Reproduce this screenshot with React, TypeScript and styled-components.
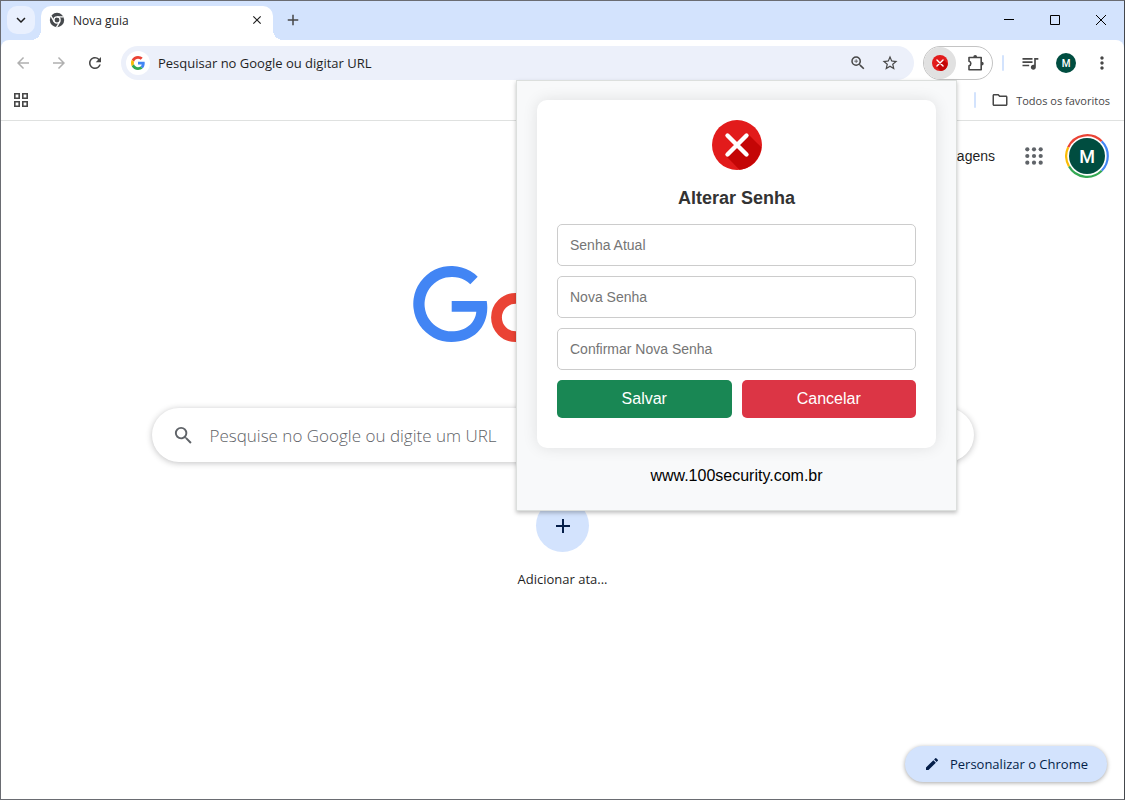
import React from "react";
import styled, { createGlobalStyle } from "styled-components";
import {
  MdAdd,
  MdArrowBack,
  MdArrowForward,
  MdClose,
  MdEdit,
  MdKeyboardArrowDown,
  MdMoreVert,
  MdOutlineFolder,
  MdOutlineQueueMusic,
  MdOutlineZoomIn,
  MdRefresh,
  MdSearch,
  MdStarBorder,
} from "react-icons/md";

const uiFont = `"Open Sans", "Noto Sans", sans-serif`;
const pageFont = `"Liberation Sans", Arial, sans-serif`;

const GlobalStyle = createGlobalStyle`
  *, *::before, *::after { box-sizing: border-box; }
  body { margin: 0; background: #fff; font-family: ${uiFont}; color: #1f1f1f; }
  button { border: 0; padding: 0; background: none; font: inherit; color: inherit; cursor: pointer; }
  a { color: inherit; text-decoration: none; }
  svg { display: block; flex: none; }
`;

const Window = styled.div`
  display: flex;
  flex-direction: column;
  min-height: 100vh;
  border: 1px solid #6a6c72;
  border-right-color: #44474c;
  background: #fff;
`;

const TabStrip = styled.header`
  display: flex;
  align-items: flex-start;
  height: 39px;
  padding-left: 6px;
  background: #d3e3fd;
`;

const TabSearch = styled.button`
  display: grid;
  place-items: center;
  width: 28px;
  height: 28px;
  margin: 5px 6px 0 0;
  border-radius: 10px;
  background: #e9f0fe;
`;

const Tab = styled.div`
  position: relative;
  display: flex;
  align-items: center;
  width: 232px;
  height: 34px;
  margin-top: 5px;
  padding: 0 8px 6px;
  gap: 8px;
  border-radius: 10px 10px 0 0;
  background: #fff;
  font-size: 12px;

  &::before,
  &::after {
    content: "";
    position: absolute;
    bottom: 0;
    width: 10px;
    height: 10px;
  }
  &::before {
    right: 100%;
    background: radial-gradient(circle at 0 0, transparent 10px, #fff 10px);
  }
  &::after {
    left: 100%;
    background: radial-gradient(circle at 100% 0, transparent 10px, #fff 10px);
  }
`;

const TabTitle = styled.span`
  flex: 1;
`;

const IconButton = styled.button<{ $size?: number; $color?: string }>`
  display: grid;
  flex: none;
  place-items: center;
  width: ${(p) => p.$size ?? 28}px;
  height: ${(p) => p.$size ?? 28}px;
  border-radius: 50%;
  color: ${(p) => p.$color ?? "#474747"};
`;

const NewTab = styled(IconButton)`
  margin: 5px 0 0 6px;
`;

const Captions = styled.div`
  display: flex;
  margin-left: auto;
`;

const CaptionButton = styled.button`
  display: grid;
  place-items: center;
  width: 46px;
  height: 38px;
`;

const ToolbarArea = styled.div`
  background: #d3e3fd;
`;

const Toolbar = styled.div`
  display: flex;
  align-items: center;
  height: 40px;
  padding: 6px 8px 0;
  border-radius: 8px 8px 0 0;
  background: #fff;
`;

const Group = styled.div`
  display: flex;
  align-items: center;
  gap: 8px;
`;

const Omnibox = styled.div`
  display: flex;
  flex: 1;
  align-items: center;
  min-width: 0;
  height: 34px;
  margin: 0 9px 0 12px;
  padding: 0 12px 0 5px;
  gap: 8px;
  border-radius: 17px;
  background: #ecf0fa;
`;

const EngineBadge = styled.span`
  display: grid;
  flex: none;
  place-items: center;
  width: 24px;
  height: 24px;
  border-radius: 50%;
  background: #fff;
`;

const AddressInput = styled.input`
  flex: 1;
  min-width: 0;
  padding: 0;
  border: 0;
  outline: 0;
  background: none;
  font: 13px ${uiFont};
  color: #1f1f1f;
  &::placeholder { color: #1f1f1f; opacity: 1; }
`;

const Extensions = styled.div`
  position: relative;
  display: flex;
  flex: none;
  justify-content: space-between;
  width: 70px;
  height: 34px;
  border: 1px solid #c4c4c4;
  border-radius: 17px;
`;

const ExtensionButton = styled.button<{ $active?: boolean }>`
  display: grid;
  place-items: center;
  width: 32px;
  height: 32px;
  border-radius: 50%;
  background: ${(p) => (p.$active ? "#e1e1e1" : "transparent")};
`;

const Divider = styled.span`
  width: 2px;
  height: 16px;
  border-radius: 1px;
  background: #d3e3fd;
`;

const ToolbarDivider = styled(Divider)`
  margin: 0 12px 0 9px;
`;

const Avatar = styled.span<{ $size: number }>`
  display: grid;
  place-items: center;
  width: ${(p) => p.$size}px;
  height: ${(p) => p.$size}px;
  border-radius: 50%;
  background: #004d40;
  color: #fff;
  font: 500 ${(p) => Math.round(p.$size / 2)}px Roboto, sans-serif;
`;

const BookmarksBar = styled.nav`
  display: flex;
  align-items: center;
  justify-content: space-between;
  height: 41px;
  padding: 0 14px 0 6px;
  border-bottom: 1px solid #dfe1e0;
`;

const AllBookmarks = styled.button`
  display: flex;
  align-items: center;
  gap: 7px;
  font-size: 11px;
  color: #474747;
`;

const BookmarkEnd = styled.div`
  display: flex;
  align-items: center;
  gap: 15px;
`;

const Popup = styled.section`
  position: absolute;
  top: 33px;
  right: 35px;
  z-index: 2;
  width: 441px;
  padding: 19px 20px 24px;
  border: 1px solid #dcdfdd;
  background: #f8f9fa;
  box-shadow: 0 2px 4px rgba(0, 0, 0, 0.25);
  font-family: ${pageFont};
  text-align: center;
`;

const Card = styled.form`
  display: flex;
  flex-direction: column;
  gap: 10px;
  padding: 20px 20px 30px;
  border-radius: 10px;
  background: #fff;
  box-shadow: 0 0 15px rgba(0, 0, 0, 0.1);
`;

const CardIcon = styled.div`
  display: flex;
  justify-content: center;
`;

const CardTitle = styled.h1`
  margin: 7px 0 5px;
  font-size: 18px;
  line-height: 22px;
  color: #333;
`;

const Field = styled.input`
  width: 100%;
  height: 42px;
  padding: 0 12px;
  border: 1px solid #ccc;
  border-radius: 5px;
  font: 14px ${pageFont};
  &::placeholder { color: #757575; opacity: 1; }
`;

const Actions = styled.div`
  display: flex;
  gap: 10px;
`;

const ActionButton = styled.button<{ $tone: string }>`
  flex: 1;
  height: 38px;
  border-radius: 5px;
  background: ${(p) => p.$tone};
  color: #fff;
  font-size: 16px;
`;

const SiteLink = styled.a`
  display: block;
  margin-top: 18px;
  font-size: 16px;
  line-height: 20px;
  color: #000;
`;

const NewTabPage = styled.main`
  display: flex;
  flex: 1;
  flex-direction: column;
  align-items: center;
`;

const PageHeader = styled.div`
  display: flex;
  align-self: stretch;
  align-items: center;
  justify-content: flex-end;
  padding: 13px 15px 0;
  font: 14px ${pageFont};
`;

const HeaderLink = styled.a`
  margin-left: 16px;
`;

const AppsButton = styled(IconButton)`
  margin: 0 11px 0 19px;
`;

const AccountButton = styled.button`
  position: relative;
  display: grid;
  place-items: center;
  width: 44px;
  height: 44px;
  & > * { grid-area: 1 / 1; }
`;

const Logo = styled.div`
  margin: 88px 0 66px;
`;

const SearchBox = styled.label`
  display: flex;
  align-items: center;
  width: calc(100% - 32px);
  max-width: 822px;
  height: 54px;
  padding: 0 20px;
  gap: 15px;
  border-radius: 27px;
  background: #fff;
  box-shadow: 0 1px 6px rgba(32, 33, 36, 0.28);
  color: #5f6368;
`;

const SearchInput = styled.input`
  flex: 1;
  min-width: 0;
  padding: 0;
  border: 0;
  outline: 0;
  background: none;
  font: 350 17px ${uiFont};
  &::placeholder { color: #5f6368; opacity: 1; }
`;

const Shortcut = styled.button`
  display: flex;
  flex-direction: column;
  align-items: center;
  gap: 17px;
  margin-top: 37px;
  font-size: 13px;
  line-height: 20px;
`;

const ShortcutCircle = styled.span`
  display: grid;
  place-items: center;
  width: 53px;
  height: 53px;
  border-radius: 50%;
  background: #d3e3fd;
  color: #041e49;
`;

const CustomizeButton = styled.button`
  display: flex;
  align-self: flex-end;
  align-items: center;
  height: 36px;
  margin: auto 17px 17px 0;
  padding: 0 19px;
  gap: 10px;
  border-radius: 18px;
  background: #d3e3fd;
  box-shadow: 0 1px 4px rgba(0, 0, 0, 0.35);
  color: #041e49;
  font-size: 13px;
`;

const ChromeMark = () => (
  <svg width="16" height="16" viewBox="0 0 16 16" fill="none" aria-hidden="true">
    <circle cx="8" cy="8" r="7.2" fill="#474a4d" />
    <circle cx="8" cy="8" r="3.1" fill="#474a4d" stroke="#fff" strokeWidth="1.3" />
    <path d="M8 4.8h6.6M5.2 9.6 1.9 3.9M10.8 9.6 7.5 15.3" stroke="#fff" strokeWidth="1.3" />
  </svg>
);

const GoogleMark = () => (
  <svg width="14" height="14" viewBox="0 0 48 48" aria-hidden="true">
    <path fill="#ea4335" d="M24 9.5c3.54 0 6.71 1.22 9.21 3.6l6.85-6.85C35.9 2.38 30.47 0 24 0 14.62 0 6.51 5.38 2.56 13.22l7.98 6.19C12.43 13.72 17.74 9.5 24 9.5z" />
    <path fill="#4285f4" d="M46.98 24.55c0-1.57-.15-3.09-.38-4.55H24v9.02h12.94c-.58 2.96-2.26 5.48-4.78 7.18l7.73 6c4.51-4.18 7.09-10.36 7.09-17.65z" />
    <path fill="#fbbc05" d="M10.53 28.59c-.48-1.45-.76-2.99-.76-4.59s.27-3.14.76-4.59l-7.98-6.19C.92 16.46 0 20.12 0 24c0 3.88.92 7.54 2.56 10.78l7.97-6.19z" />
    <path fill="#34a853" d="M24 48c6.48 0 11.93-2.13 15.89-5.81l-7.73-6c-2.15 1.45-4.92 2.3-8.16 2.3-6.26 0-11.57-4.22-13.47-9.91l-7.98 6.19C6.51 42.62 14.62 48 24 48z" />
  </svg>
);

const CrossMark = ({ size }: { size: number }) => (
  <svg width={size} height={size} viewBox="0 0 50 50" aria-hidden="true">
    <circle cx="25" cy="25" r="25" fill="#e21b1b" />
    <path d="M36.5 14.5 49.3 27.3A25 25 0 0 1 27.5 49.8L14.5 36.5 25 25Z" fill="#c40606" />
    <path d="M15.5 15.5l19 19M34.5 15.5l-19 19" stroke="#fff" strokeWidth="4.4" strokeLinecap="round" />
  </svg>
);

const PuzzleMark = () => (
  <svg width="18" height="18" viewBox="0 0 18 18" fill="none" aria-hidden="true">
    <path d="M2 3.5h12.2v12.2H2v-3.9a2.3 2.3 0 0 0 0-4.5Z" stroke="#474747" strokeWidth="1.6" strokeLinejoin="round" />
    <path d="M6.3 3a1.9 1.9 0 0 1 3.8 0ZM14.8 7.7a1.9 1.9 0 0 1 0 3.8Z" fill="#474747" />
  </svg>
);

const AppGridMark = () => (
  <svg width="14" height="14" viewBox="0 0 14 14" fill="none" stroke="#474747" strokeWidth="1.6" aria-hidden="true">
    <path d="M.8.8h4.4v4.4H.8zM8.8.8h4.4v4.4H8.8zM.8 8.8h4.4v4.4H.8zM8.8 8.8h4.4v4.4H8.8z" />
  </svg>
);

const DotGridMark = () => (
  <svg width="18" height="18" viewBox="0 0 18 18" fill="currentColor" aria-hidden="true">
    {[2.3, 9, 15.7].flatMap((y) =>
      [2.3, 9, 15.7].map((x) => <circle key={`${x}-${y}`} cx={x} cy={y} r="2.1" />)
    )}
  </svg>
);

const AccountRing = () => (
  <svg width="44" height="44" viewBox="0 0 44 44" fill="none" strokeWidth="2.2" aria-hidden="true">
    <path d="M3.2 13.2A20.8 20.8 0 0 1 36.7 7.3" stroke="#ea4335" />
    <path d="M36.7 7.3A20.8 20.8 0 0 1 36.7 36.7" stroke="#4285f4" />
    <path d="M36.7 36.7A20.8 20.8 0 0 1 4 32.4" stroke="#34a853" />
    <path d="M4 32.4A20.8 20.8 0 0 1 3.2 13.2" stroke="#fbbc05" />
  </svg>
);

const GoogleLogo = () => (
  <svg width="299" height="76" viewBox="0 0 299 76" fill="none" strokeWidth="10.8" role="img" aria-label="Google" overflow="visible">
    <path fill="#4285f4" d="M64.7 10.7A38 38 0 1 0 38.5 76C60.5 76 74.3 61.5 74.3 41.5 74.3 39.3 74.1 37 73.7 35H38.7V45.7H63.3C62.4 56.5 53.5 65.3 38.5 65.3A27.2 27.2 0 1 1 57.3 18.2Z" />
    <circle cx="102.7" cy="51.5" r="19.2" stroke="#ea4335" />
    <circle cx="156" cy="51.5" r="19.2" stroke="#fbbc05" />
    <circle cx="208" cy="51.5" r="19.2" stroke="#4285f4" />
    <path d="M227 28v46a19 19 0 0 1-36 8" stroke="#4285f4" />
    <path d="M245 2v73" stroke="#34a853" />
    <path d="m257 58 35-15a19 19 0 1 0-3 22" stroke="#ea4335" />
  </svg>
);

const PasswordPopup = () => (
  <Popup aria-label="Alterar Senha">
    <Card onSubmit={(e) => e.preventDefault()}>
      <CardIcon>
        <CrossMark size={50} />
      </CardIcon>
      <CardTitle>Alterar Senha</CardTitle>
      <Field type="password" placeholder="Senha Atual" aria-label="Senha Atual" />
      <Field type="password" placeholder="Nova Senha" aria-label="Nova Senha" />
      <Field type="password" placeholder="Confirmar Nova Senha" aria-label="Confirmar Nova Senha" />
      <Actions>
        <ActionButton type="submit" $tone="#198754">Salvar</ActionButton>
        <ActionButton type="button" $tone="#dc3545">Cancelar</ActionButton>
      </Actions>
    </Card>
    <SiteLink href="#site">www.100security.com.br</SiteLink>
  </Popup>
);

export default function App() {
  return (
    <>
      <GlobalStyle />
      <Window>
        <TabStrip>
          <TabSearch aria-label="Pesquisar guias"><MdKeyboardArrowDown size={18} /></TabSearch>
          <Tab>
            <ChromeMark />
            <TabTitle>Nova guia</TabTitle>
            <IconButton $size={16} $color="#1f1f1f" aria-label="Fechar guia"><MdClose size={14} /></IconButton>
          </Tab>
          <NewTab aria-label="Abrir nova guia"><MdAdd size={18} /></NewTab>
          <Captions>
            <CaptionButton aria-label="Minimizar">
              <svg width="10" height="10" stroke="#000"><path d="M0 4.5h10" /></svg>
            </CaptionButton>
            <CaptionButton aria-label="Maximizar">
              <svg width="10" height="10" stroke="#000" fill="none"><path d="M.5.5h9v9h-9z" /></svg>
            </CaptionButton>
            <CaptionButton aria-label="Fechar">
              <svg width="10" height="10" stroke="#000"><path d="m0 0 10 10M10 0 0 10" /></svg>
            </CaptionButton>
          </Captions>
        </TabStrip>

        <ToolbarArea>
          <Toolbar>
            <Group>
              <IconButton $color="#b0b0b0" aria-label="Voltar"><MdArrowBack size={18} /></IconButton>
              <IconButton $color="#b0b0b0" aria-label="Avançar"><MdArrowForward size={18} /></IconButton>
              <IconButton aria-label="Recarregar"><MdRefresh size={18} /></IconButton>
            </Group>
            <Omnibox>
              <EngineBadge><GoogleMark /></EngineBadge>
              <AddressInput placeholder="Pesquisar no Google ou digitar URL" aria-label="Barra de endereço" />
              <IconButton $size={24} aria-label="Zoom"><MdOutlineZoomIn size={18} /></IconButton>
              <IconButton $size={24} aria-label="Adicionar aos favoritos"><MdStarBorder size={18} /></IconButton>
            </Omnibox>
            <Extensions>
              <ExtensionButton $active aria-label="Extensão"><CrossMark size={16} /></ExtensionButton>
              <ExtensionButton aria-label="Extensões"><PuzzleMark /></ExtensionButton>
              <PasswordPopup />
            </Extensions>
            <ToolbarDivider />
            <Group>
              <IconButton aria-label="Controle de mídia"><MdOutlineQueueMusic size={20} /></IconButton>
              <IconButton aria-label="Perfil"><Avatar $size={20}>M</Avatar></IconButton>
              <IconButton aria-label="Menu"><MdMoreVert size={20} /></IconButton>
            </Group>
          </Toolbar>
        </ToolbarArea>

        <BookmarksBar>
          <IconButton aria-label="Apps"><AppGridMark /></IconButton>
          <BookmarkEnd>
            <Divider />
            <AllBookmarks><MdOutlineFolder size={18} />Todos os favoritos</AllBookmarks>
          </BookmarkEnd>
        </BookmarksBar>

        <NewTabPage>
          <PageHeader>
            <HeaderLink href="#gmail">Gmail</HeaderLink>
            <HeaderLink href="#imagens">Imagens</HeaderLink>
            <AppsButton $size={40} $color="#5f6368" aria-label="Google Apps"><DotGridMark /></AppsButton>
            <AccountButton aria-label="Conta do Google">
              <AccountRing />
              <Avatar $size={36}>M</Avatar>
            </AccountButton>
          </PageHeader>
          <Logo><GoogleLogo /></Logo>
          <SearchBox>
            <MdSearch size={23} />
            <SearchInput type="search" placeholder="Pesquise no Google ou digite um URL" aria-label="Pesquise no Google" />
          </SearchBox>
          <Shortcut>
            <ShortcutCircle><MdAdd size={24} /></ShortcutCircle>
            Adicionar ata...
          </Shortcut>
          <CustomizeButton><MdEdit size={16} />Personalizar o Chrome</CustomizeButton>
        </NewTabPage>
      </Window>
    </>
  );
}
